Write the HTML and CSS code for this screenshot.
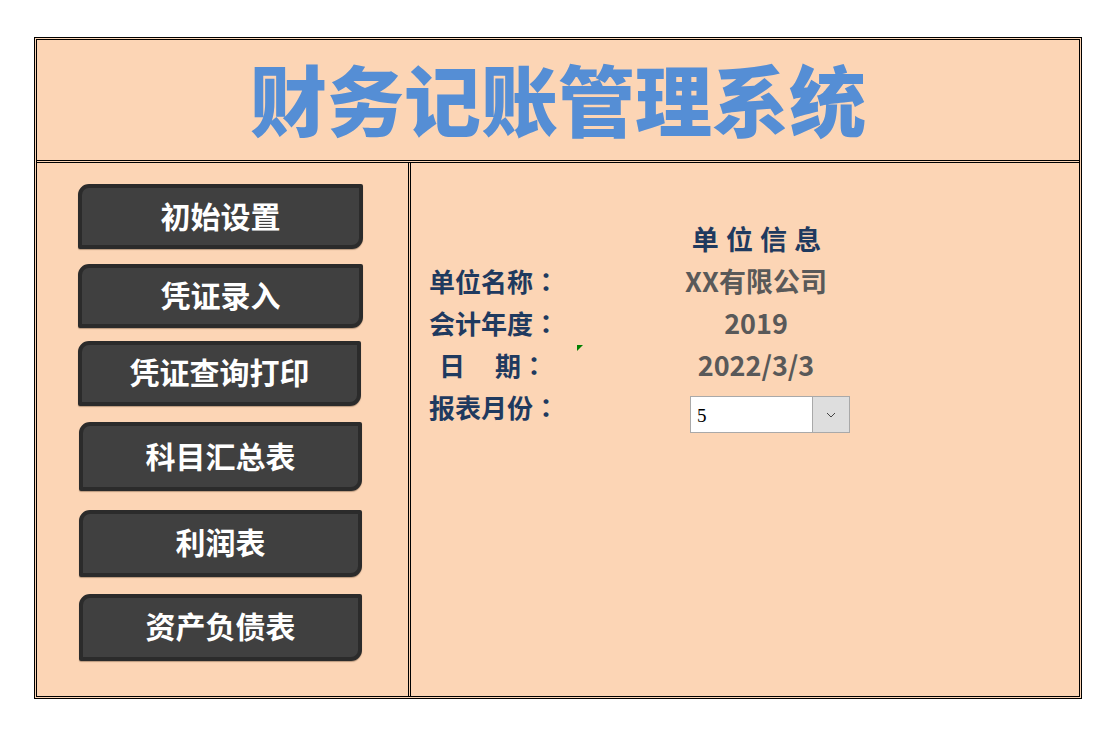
FILE: index.html
```html
<!DOCTYPE html>
<html>
	<head>
		<meta charset="UTF-8">
		<title>财务记账管理系统</title>
		<link rel="stylesheet" href="styles.css">
	</head>

	<body>
		<div class="box">
			<div class="header">财务记账管理系统</div>
			<div class="main">
				<div class="menu">
					<div class="btn btn1">初始设置</div>
					<div class="btn btn2">凭证录入</div>
					<div class="btn btn3">凭证查询打印</div>
					<div class="btn btn4">科目汇总表</div>
					<div class="btn btn5">利润表</div>
					<div class="btn btn6">资产负债表</div>
				</div>
				<div class="info">
					<div class="mark"></div>
					<div class="title">单 位 信 息</div>
					<div class="row">
						<div class="label">单位名称<span class="colon">：</span></div>
						<div class="value">XX有限公司</div>
					</div>
					<div class="row">
						<div class="label">会计年度<span class="colon">：</span></div>
						<div class="value">2019</div>
					</div>
					<div class="row">
						<div class="label label-date"><span class="date-first">日</span>期<span class="colon">：</span></div>
						<div class="value">2022/3/3</div>
					</div>
					<div class="row">
						<div class="label">报表月份<span class="colon">：</span></div>
						<div class="combo">
							<div class="combo-text">5</div>
							<div class="combo-arrow">
								<svg width="10" height="6" viewBox="0 0 10 6"><path d="M1 1 L5 5 L9 1" fill="none" stroke="#444" stroke-width="1"/></svg>
							</div>
						</div>
					</div>
				</div>
			</div>
		</div>
	</body>
</html>
```

FILE: styles.css
```css
body {
	margin: 0;
	padding: 37px 0 0 34px;
	background: #fff;
	font-family: "Noto Sans CJK SC", "Liberation Sans", sans-serif;
}

.box {
	width: 1048px;
	height: 662px;
	box-sizing: border-box;
	border: 3px double #000;
	background: #fcd5b5;
	display: flex;
	flex-direction: column;
}

.header {
	height: 123px;
	box-sizing: border-box;
	flex-shrink: 0;
	border-bottom: 3px double #000;
	color: #558ed5;
	font-size: 77px;
	font-weight: 900;
	line-height: 116px;
	text-align: center;
}

.main {
	flex: 1;
	display: flex;
}

.menu {
	width: 374px;
	box-sizing: border-box;
	flex-shrink: 0;
	border-right: 3px double #000;
	padding-left: 41px;
}

.btn {
	box-sizing: border-box;
	width: 285px;
	border: 4px solid #2b2b2b;
	border-radius: 11px 2px 11px 2px;
	background: #404040;
	color: #fff;
	font-size: 30px;
	font-weight: 700;
	text-align: center;
	box-shadow: 0 1px 1px rgba(60, 40, 20, 0.35);
}

.btn1 { height: 65px; margin-top: 21px; line-height: 54px; }
.btn2 { height: 64px; margin-top: 15px; line-height: 53px; }
.btn3 { height: 65px; margin-top: 13px; width: 283px; line-height: 53px; }
.btn4 { height: 69px; margin-top: 16px; margin-left: 1px; width: 283px; line-height: 58px; }
.btn5 { height: 67px; margin-top: 19px; margin-left: 1px; width: 283px; line-height: 55px; }
.btn6 { height: 67px; margin-top: 17px; margin-left: 1px; width: 283px; line-height: 55px; }

.info {
	flex: 1;
	position: relative;
	padding: 55px 0 0 18px;
}

.mark {
	position: absolute;
	left: 166px;
	top: 182px;
	width: 0;
	height: 0;
	border-top: 6px solid #008000;
	border-right: 6px solid transparent;
}

.title {
	width: 655px;
	color: #1f3a5f;
	font-size: 27px;
	font-weight: 700;
	line-height: 42px;
	text-align: center;
	word-spacing: 1px;
}

.row {
	display: flex;
	height: 42px;
	line-height: 42px;
	font-size: 26px;
	font-weight: 700;
}

.label {
	width: 227px;
	flex-shrink: 0;
	color: #1f3a5f;
}

.colon {
	font-family: "Noto Sans CJK TC", sans-serif;
}

.label-date {
	padding-left: 10px;
	box-sizing: border-box;
}

.date-first {
	margin-right: 30px;
}

.value {
	width: 200px;
	color: #595959;
	font-size: 27px;
	text-align: center;
	white-space: nowrap;
}

.combo {
	display: flex;
	box-sizing: border-box;
	width: 160px;
	height: 37px;
	margin: 10px 0 0 34px;
	border: 1px solid #a9a9a9;
	background: #fff;
}

.combo-text {
	flex: 1;
	padding-left: 6px;
	color: #000;
	font-family: "Liberation Serif", serif;
	font-size: 19px;
	font-weight: 400;
	line-height: 37px;
}

.combo-arrow {
	width: 36px;
	border-left: 1px solid #a9a9a9;
	background: #dedede;
	display: flex;
	align-items: center;
	justify-content: center;
}
```
